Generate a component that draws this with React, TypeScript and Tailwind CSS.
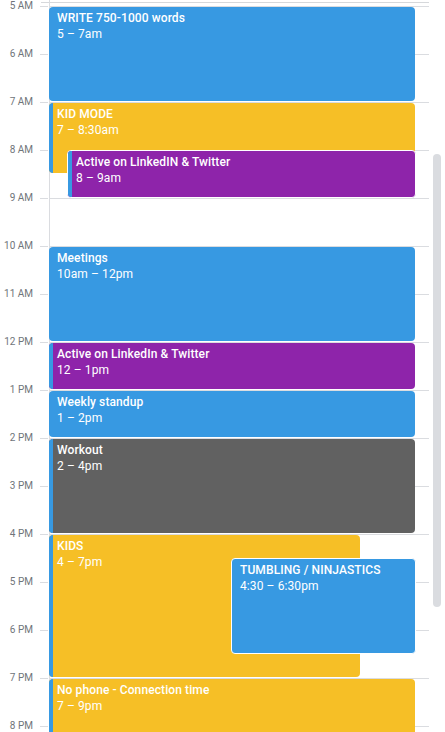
import React from "react";

const HOUR = 48;

type Ev = {
  title: string;
  time: string;
  start: number; // hours from 5am
  dur: number;
  left: number;
  width: number;
  color: string;
  stripe?: boolean;
  bordered?: boolean;
};

const events: Ev[] = [
  { title: "WRITE 750-1000 words", time: "5 – 7am", start: 0, dur: 2, left: 0, width: 366, color: "bg-[#3799e2]" },
  { title: "KID MODE", time: "7 – 8:30am", start: 2, dur: 1.5, left: 0, width: 366, color: "bg-[#f6bf26]", stripe: true },
  { title: "Active on LinkedIN & Twitter", time: "8 – 9am", start: 3, dur: 1, left: 18, width: 349, color: "bg-[#8e24aa]", stripe: true, bordered: true },
  { title: "Meetings", time: "10am – 12pm", start: 5, dur: 2, left: 0, width: 366, color: "bg-[#3799e2]" },
  { title: "Active on LinkedIn & Twitter", time: "12 – 1pm", start: 7, dur: 1, left: 0, width: 366, color: "bg-[#8e24aa]", stripe: true },
  { title: "Weekly standup", time: "1 – 2pm", start: 8, dur: 1, left: 0, width: 366, color: "bg-[#3799e2]" },
  { title: "Workout", time: "2 – 4pm", start: 9, dur: 2, left: 0, width: 366, color: "bg-[#616161]", stripe: true },
  { title: "KIDS", time: "4 – 7pm", start: 11, dur: 3, left: 0, width: 311, color: "bg-[#f6bf26]", stripe: true },
  { title: "TUMBLING / NINJASTICS", time: "4:30 – 6:30pm", start: 11.5, dur: 2, left: 182, width: 185, color: "bg-[#3799e2]", bordered: true },
  { title: "No phone - Connection time", time: "7 – 9pm", start: 14, dur: 2, left: 0, width: 366, color: "bg-[#f6bf26]", stripe: true },
];

const hours = ["5 AM", "6 AM", "7 AM", "8 AM", "9 AM", "10 AM", "11 AM", "12 PM", "1 PM", "2 PM", "3 PM", "4 PM", "5 PM", "6 PM", "7 PM", "8 PM"];

function Event({ e }: { e: Ev }) {
  const top = e.bordered ? e.start * HOUR : e.start * HOUR + 1;
  const height = e.bordered ? e.dur * HOUR : e.dur * HOUR - 2;
  return (
    <div
      className={`absolute flex overflow-hidden rounded-[4px] ${e.color} ${e.bordered ? "border border-white" : ""}`}
      style={{ top, left: e.left, width: e.width, height }}
    >
      {e.stripe && <div className="w-[4px] shrink-0 bg-[#3799e2]" />}
      <div className={`flex flex-col pt-[3px] text-[12px] leading-[16px] text-white ${e.stripe ? "pl-[4px]" : "pl-[8px]"}`}>
        <div className="font-medium whitespace-nowrap tracking-[0.1px]">{e.title}</div>
        <div className="whitespace-nowrap tracking-[0.1px]">{e.time}</div>
      </div>
    </div>
  );
}

export default function App() {
  return (
    <div className="relative w-[445px] h-[732px] overflow-hidden bg-white font-['Roboto',_'Liberation_Sans',_sans-serif]">
      {/* top divider */}
      <div className="absolute left-[41px] top-[2px] w-[388px] h-px bg-[#d6d8db]" />
      {/* vertical gutter line */}
      <div className="absolute left-[49px] top-0 w-px h-[732px] bg-[#dadce0]" />

      {/* hour grid */}
      <div className="flex pt-[6px]">
        <div className="flex flex-col w-[49px] shrink-0">
          {hours.map((h) => (
            <div key={h} className="relative h-[48px]">
              <span className="absolute right-[16px] top-0 -translate-y-1/2 text-[10px] leading-[12px] text-[#70757a] whitespace-nowrap">
                {h}
              </span>
              <div className="absolute right-[1px] top-0 w-[8px] h-px bg-[#dadce0]" />
            </div>
          ))}
        </div>
        <div className="relative flex flex-col w-[380px]">
          {hours.map((h) => (
            <div key={h} className="h-[48px] border-t border-[#dadce0]" />
          ))}
          <div className="absolute left-0 top-0 w-[380px] h-full">
            {events.map((e, i) => (
              <Event key={i} e={e} />
            ))}
          </div>
        </div>
      </div>

      {/* scrollbar */}
      <div className="absolute left-[433px] top-[154px] w-[8px] h-[453px] rounded-full bg-[#dadce0]" />
    </div>
  );
}
